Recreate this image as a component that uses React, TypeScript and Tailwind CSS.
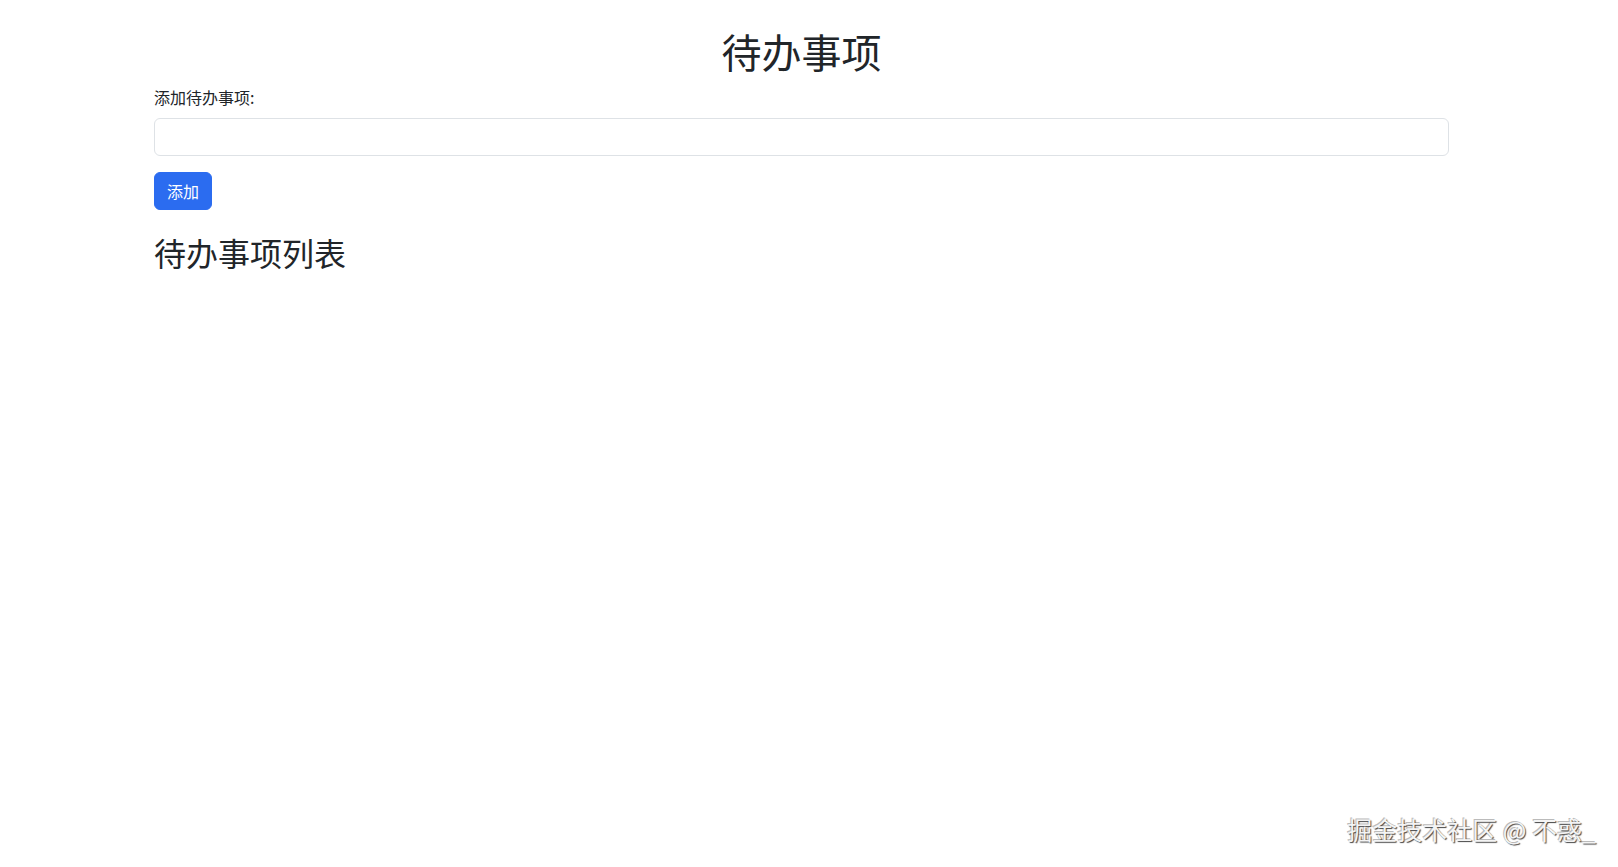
import { useState } from 'react';

export default function App() {
  const [todo, setTodo] = useState('');
  const [todos, setTodos] = useState<string[]>([]);

  const addTodo = () => {
    if (!todo.trim()) return;
    setTodos([...todos, todo.trim()]);
    setTodo('');
  };

  return (
    <div className="relative min-h-[867px] bg-white text-[#212529] font-['Noto_Sans_CJK_SC','Noto_Sans',sans-serif]">
      <div className="ml-[154px] w-[1295px]">
        <h1 className="pt-[27px] mb-[10px] text-center text-[40px] leading-[48px] font-normal">待办事项</h1>

        <label htmlFor="todo" className="block mb-[9px] text-[16px] leading-[24px]">
          添加待办事项:
        </label>
        <input
          id="todo"
          value={todo}
          onChange={(e) => setTodo(e.target.value)}
          className="block w-full h-[38px] px-3 text-[16px] border border-[#dee2e6] rounded-[6px] outline-none"
        />

        <button
          onClick={addTodo}
          className="mt-4 h-[38px] px-3 text-[16px] leading-[24px] text-white bg-[#2b6cf0] border border-[#2b6cf0] rounded-[6px]"
        >
          添加
        </button>

        <h2 className="mt-[23px] text-[32px] leading-[38px] font-normal">待办事项列表</h2>
        <ul>
          {todos.map((t, i) => (
            <li key={i} className="py-2 text-[16px]">{t}</li>
          ))}
        </ul>
      </div>

      {/* watermark */}
      <div className="absolute right-[22px] bottom-[23px] text-[25px] leading-[30px] text-[#f4f4f4] [text-shadow:1px_1px_1px_#444,-1px_-1px_0_#bbb] font-['Noto_Sans_CJK_SC',sans-serif]">
        掘金技术社区 @ 不惑_
      </div>
    </div>
  );
}
